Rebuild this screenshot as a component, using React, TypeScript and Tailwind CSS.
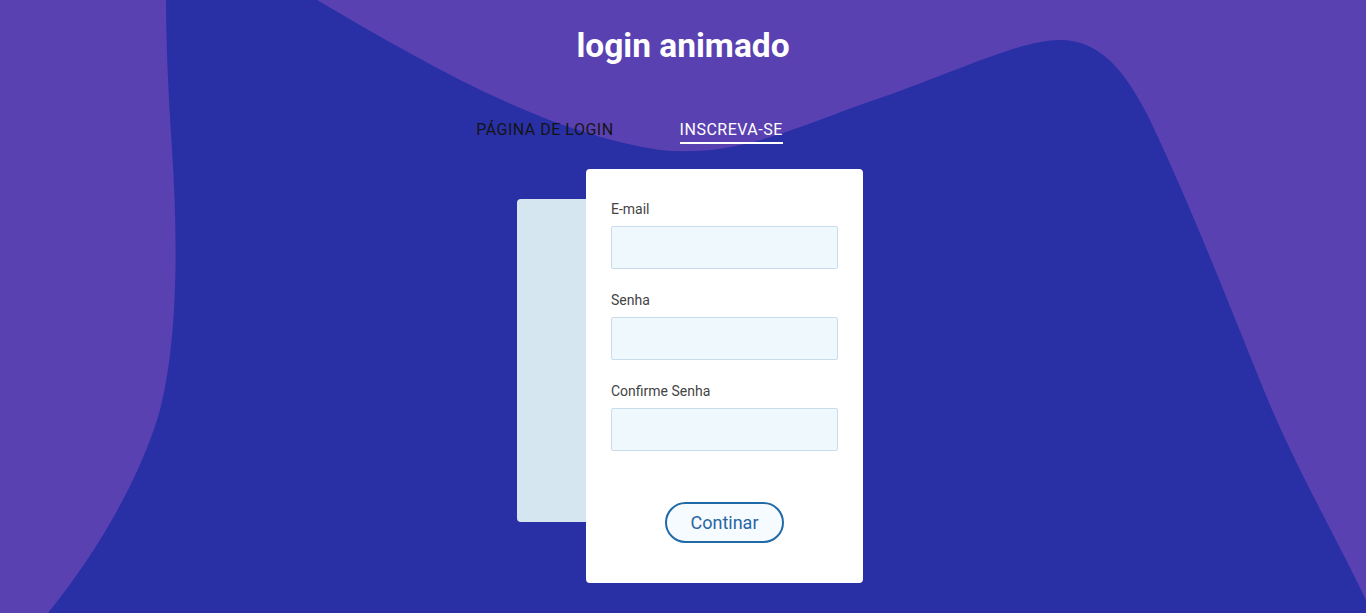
import React from "react";

function Field({ label, type }: { label: string; type: string }) {
  return (
    <div className="flex flex-col">
      <label className="text-[14px] leading-[20px] text-[#444444]">{label}</label>
      <input
        type={type}
        className="mt-[7px] h-[43px] w-[227px] rounded-[2px] border border-[#c8dcee] bg-[#eef8fd] outline-none"
      />
    </div>
  );
}

export default function App() {
  return (
    <div className="relative h-[613px] w-full overflow-hidden bg-[#5a41b2] font-['Roboto',sans-serif]">
      <svg
        className="absolute inset-0 h-full w-full"
        viewBox="0 0 1366 613"
        preserveAspectRatio="none"
      >
        <path
          fill="#2930a6"
          d="M166,0 L317,0 C420,60 540,132 660,150 C740,158 800,125 880,98 C960,70 1020,40 1060,40 C1100,40 1125,70 1150,120 C1195,215 1235,320 1270,405 C1300,475 1340,545 1366,600 L1366,613 L48,613 C95,555 140,480 160,410 C178,340 178,240 172,150 C168,90 166,40 166,0 Z"
        />
      </svg>
      <div className="relative flex flex-col items-center">
        <h1 className="pt-[26px] text-[33.5px] font-bold leading-[40px] text-white">login animado</h1>
        <div className="mr-[107px] mt-[52px] flex gap-[66px] text-[16px] leading-[24px] tracking-[0.5px]">
          <button className="border-b-2 border-transparent uppercase text-[#141414]">Página de login</button>
          <button className="border-b-2 border-white uppercase text-white">Inscreva-se</button>
        </div>
        <div className="ml-[14px] mt-[25px] flex items-start">
          <div className="-mr-[11px] mt-[30px] h-[323px] w-[80px] rounded-[4px] bg-[#d5e6f0]" />
          <div className="relative flex h-[414px] w-[277px] flex-col rounded-[4px] bg-white px-[25px] pt-[30px]">
            <div className="flex flex-col gap-[21px]">
              <Field label="E-mail" type="email" />
              <Field label="Senha" type="password" />
              <Field label="Confirme Senha" type="password" />
            </div>
            <div className="mt-[51px] flex justify-center">
              <button className="h-[41px] w-[119px] rounded-full border-2 border-[#1f6aa7] bg-[#f6fbff] text-[18px] text-[#2766a3]">
                Continar
              </button>
            </div>
          </div>
        </div>
      </div>
    </div>
  );
}
